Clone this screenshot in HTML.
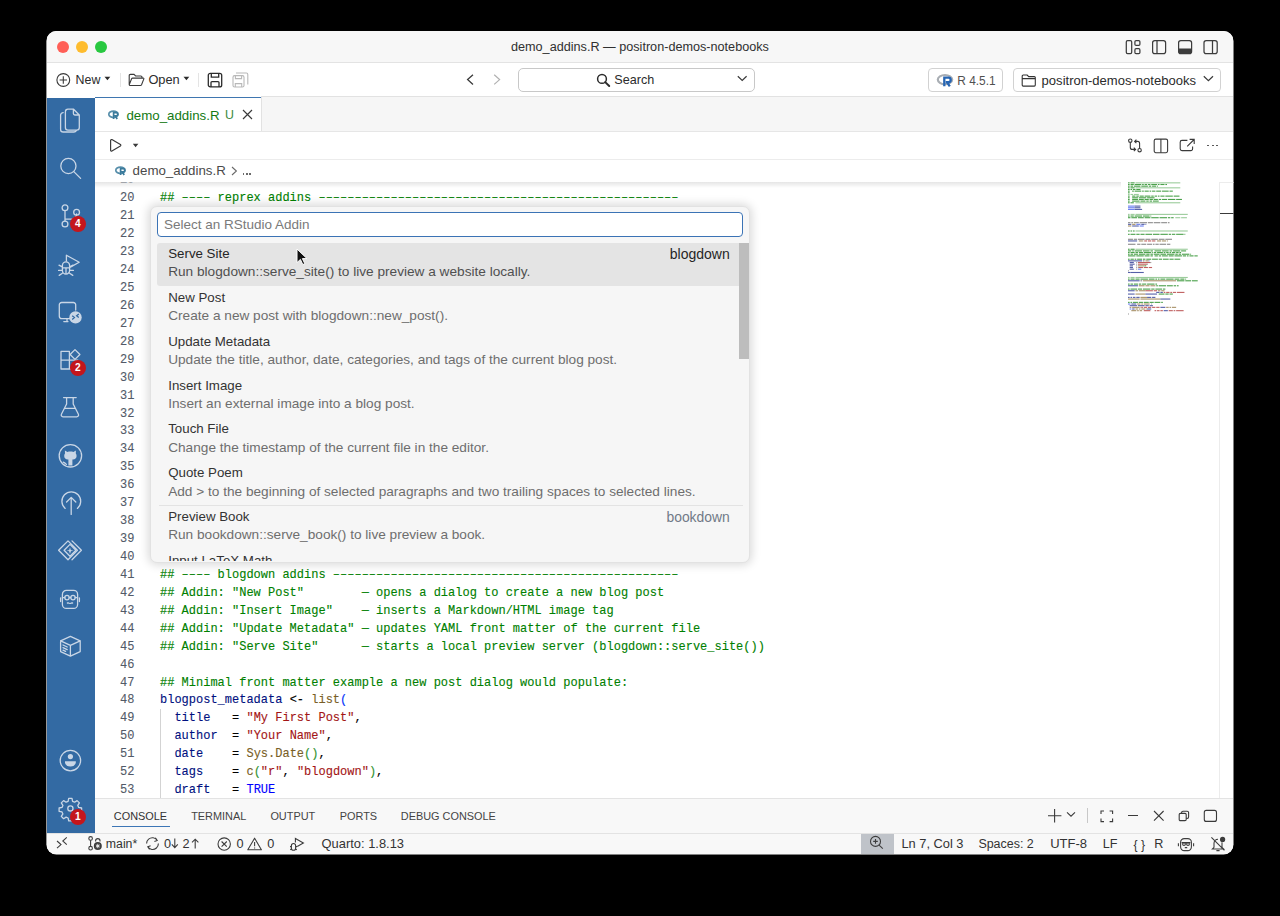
<!DOCTYPE html>
<html><head><meta charset="utf-8">
<style>
*{box-sizing:border-box;margin:0;padding:0}
html,body{width:1280px;height:916px;background:#000;overflow:hidden}
body{font-family:"Liberation Sans",sans-serif;position:relative}
.win{position:absolute;left:0;top:0;width:1280px;height:916px;clip-path:inset(31px 46.5px 61.6px 46.4px round 10px);background:#fff}
.a{position:absolute}
.t{position:absolute;white-space:pre;line-height:1}
svg{position:absolute;overflow:visible}
</style></head><body><div class="win">
<div class="a" style="left:47px;top:31px;width:1186px;height:31px;background:#f7f7f7"></div>
<div class="a" style="left:47px;top:62px;width:1186px;height:1px;background:#e3e3e3"></div>
<div class="a" style="left:56.9px;top:40.7px;width:12px;height:12px;border-radius:50%;background:#ff5f57"></div>
<div class="a" style="left:76.0px;top:40.7px;width:12px;height:12px;border-radius:50%;background:#febc2e"></div>
<div class="a" style="left:95.0px;top:40.7px;width:12px;height:12px;border-radius:50%;background:#28c840"></div>
<div class="t" style="left:511.00px;top:41.05px;font-size:12.65px;color:#303030;font-weight:400;font-family:"Liberation Sans",sans-serif;letter-spacing:0px;">demo_addins.R — positron-demos-notebooks</div>
<svg style="left:1125px;top:39px" width="16" height="16" viewBox="0 0 16 16"><rect x="1.3" y="1.6" width="5.4" height="13" rx="1.3" fill="none" stroke="#3c3c3c" stroke-width="1.25"/><rect x="9.9" y="1.6" width="5" height="4.8" rx="1.2" fill="none" stroke="#3c3c3c" stroke-width="1.25"/><rect x="9.9" y="9.7" width="5" height="4.9" rx="1.2" fill="none" stroke="#3c3c3c" stroke-width="1.25"/></svg>
<svg style="left:1151px;top:39px" width="16" height="16" viewBox="0 0 16 16"><rect x="1.6" y="1.6" width="13" height="13" rx="2.2" fill="none" stroke="#3c3c3c" stroke-width="1.25"/><line x1="6" y1="1.6" x2="6" y2="14.6" fill="none" stroke="#3c3c3c" stroke-width="1.25"/></svg>
<svg style="left:1177px;top:39px" width="16" height="16" viewBox="0 0 16 16"><rect x="1.6" y="1.6" width="13" height="13" rx="2.2" fill="none" stroke="#3c3c3c" stroke-width="1.25"/><path d="M1.6 9.6 H14.6 V12.4 a2.2 2.2 0 0 1 -2.2 2.2 H3.8 a2.2 2.2 0 0 1 -2.2 -2.2 Z" fill="#3c3c3c"/></svg>
<svg style="left:1203px;top:39px" width="16" height="16" viewBox="0 0 16 16"><rect x="1.0" y="1.6" width="13.2" height="13" rx="2.2" fill="none" stroke="#3c3c3c" stroke-width="1.25"/><line x1="9.5" y1="1.6" x2="9.5" y2="14.6" fill="none" stroke="#3c3c3c" stroke-width="1.25"/></svg>
<div class="a" style="left:47px;top:63px;width:1186px;height:34px;background:#ffffff"></div>
<svg style="left:56px;top:73px" width="15" height="15" viewBox="0 0 15 15"><circle cx="7.3" cy="7" r="6.4" fill="none" stroke="#3a3a3a" stroke-width="1.1"/><path d="M7.3 3.3V10.7M3.6 7H11" fill="none" stroke="#3a3a3a" stroke-width="1.1"/></svg>
<div class="t" style="left:75.60px;top:73.86px;font-size:12.4px;color:#2b2b2b;font-weight:400;font-family:"Liberation Sans",sans-serif;letter-spacing:0px;">New</div>
<svg style="left:104px;top:76px" width="7" height="5" viewBox="0 0 7 5"><path d="M0.5 0.8H6.3L3.4 4.3Z" fill="#2b2b2b"/></svg>
<div class="a" style="left:120px;top:73px;width:1px;height:14px;background:#e4e4e4"></div>
<svg style="left:128px;top:73px" width="17" height="14" viewBox="0 0 17 14"><path d="M1.2 11.8V2.6a1.2 1.2 0 0 1 1.2-1.2H6l1.6 1.6h5.2a1.2 1.2 0 0 1 1.2 1.2v1.6M1.2 11.8l2.4-6a1.2 1.2 0 0 1 1.1-0.7h10.6a0.6 0.6 0 0 1 .55 .8l-2.3 5.9a1.2 1.2 0 0 1-1.1 .7H2.2a1 1 0 0 1-1-1" fill="none" stroke="#3a3a3a" stroke-width="1.1"/></svg>
<div class="t" style="left:148.40px;top:73.52px;font-size:12.8px;color:#2b2b2b;font-weight:400;font-family:"Liberation Sans",sans-serif;letter-spacing:0px;">Open</div>
<svg style="left:183px;top:76px" width="7" height="5" viewBox="0 0 7 5"><path d="M0.5 0.8H6.3L3.4 4.3Z" fill="#2b2b2b"/></svg>
<div class="a" style="left:198px;top:73px;width:1px;height:14px;background:#e4e4e4"></div>
<svg style="left:207px;top:72px" width="16" height="16" viewBox="0 0 16 16"><rect x="1.3" y="1.3" width="13.4" height="13.6" rx="2" fill="none" stroke="#2b2b2b" stroke-width="1.3"/><path d="M4.3 1.3V5.2H11.7V1.3M4 14.9V10.6a1 1 0 0 1 1-1H11a1 1 0 0 1 1 1V14.9" fill="none" stroke="#2b2b2b" stroke-width="1.3"/></svg>
<svg style="left:232px;top:72px" width="17" height="17" viewBox="0 0 17 17"><rect x="1" y="3.6" width="11" height="11.4" rx="1.6" fill="none" stroke="#b8b8b8" stroke-width="1.1"/><path d="M3.4 3.6V6.6H9.6V3.6M3.3 15V11.6h6.4V15M4 1H14.4a1.4 1.4 0 0 1 1.4 1.4V12.4" fill="none" stroke="#b8b8b8" stroke-width="1.1"/></svg>
<svg style="left:466px;top:74px" width="9" height="12" viewBox="0 0 9 12"><path d="M7 0.8L1.6 5.6 7 10.4" fill="none" stroke="#3a3a3a" stroke-width="1.3"/></svg>
<svg style="left:493px;top:74px" width="9" height="12" viewBox="0 0 9 12"><path d="M1.2 0.8L6.6 5.6 1.2 10.4" fill="none" stroke="#b0b0b0" stroke-width="1.2"/></svg>
<div class="a" style="left:517.5px;top:68.3px;width:237px;height:23.5px;border:1px solid #c8c8c8;border-radius:5px;background:#fff"></div>
<svg style="left:596px;top:73px" width="15" height="14" viewBox="0 0 15 14"><circle cx="6" cy="5.9" r="4.4" fill="none" stroke="#2b2b2b" stroke-width="1.5"/><path d="M9.2 9.1L13.2 13" stroke="#2b2b2b" stroke-width="2" stroke-linecap="round"/></svg>
<div class="t" style="left:614.30px;top:73.89px;font-size:12.6px;color:#2b2b2b;font-weight:400;font-family:"Liberation Sans",sans-serif;letter-spacing:0px;">Search</div>
<svg style="left:737px;top:75px" width="11" height="7" viewBox="0 0 11 7"><path d="M0.8 1.2L5.2 5.4 9.6 1.2" fill="none" stroke="#3a3a3a" stroke-width="1.2"/></svg>
<div class="a" style="left:928.3px;top:68.3px;width:75.2px;height:23.5px;border:1px solid #d2d2d2;border-radius:4px;background:#fff"></div>
<svg style="left:937px;top:74px" width="18" height="13" viewBox="0 0 18 13"><ellipse cx="8" cy="5.6" rx="7.2" ry="4.6" fill="none" stroke="#a9aeb4" stroke-width="2.2"/><path d="M6.2 3.6h5.2a2.3 2.3 0 0 1 0 4.6h-2.6M7.3 3.6V12.3M9.9 8.2L12.8 12.3" fill="none" stroke="#2665b3" stroke-width="2.3"/></svg>
<div class="t" style="left:957.30px;top:76.29px;font-size:11.9px;color:#505050;font-weight:400;font-family:"Liberation Sans",sans-serif;letter-spacing:0px;">R 4.5.1</div>
<div class="a" style="left:1012.5px;top:68.3px;width:208px;height:23.5px;border:1px solid #d2d2d2;border-radius:4px;background:#fff"></div>
<svg style="left:1021px;top:74px" width="16" height="13" viewBox="0 0 16 13"><path d="M1.2 11.1V2a1 1 0 0 1 1-1h4l1.5 1.6h5.6a1 1 0 0 1 1 1v7.5a1 1 0 0 1-1 1H2.2a1 1 0 0 1-1-1ZM1.2 4.6h13.1" fill="none" stroke="#333" stroke-width="1.1"/></svg>
<div class="t" style="left:1041.60px;top:73.51px;font-size:13.05px;color:#2b2b2b;font-weight:400;font-family:"Liberation Sans",sans-serif;letter-spacing:0px;">positron-demos-notebooks</div>
<svg style="left:1203px;top:75px" width="12" height="7" viewBox="0 0 12 7"><path d="M0.8 1.2L5.4 5.6 10 1.2" fill="none" stroke="#3a3a3a" stroke-width="1.2"/></svg>
<div class="a" style="left:47px;top:98px;width:48px;height:735px;background:#336aa3"></div>
<svg style="left:58px;top:108px" width="24" height="26" viewBox="0 0 24 26"><path d="M5.2 4.6 a2.6 2.6 0 0 0-2.6 2.6V21.4a2.6 2.6 0 0 0 2.6 2.6H16a2.6 2.6 0 0 0 2.3-1.4" fill="none" stroke="#c9d6e6" stroke-width="1.3" stroke-linecap="round" stroke-linejoin="round"/><path d="M7.4 3.8a2.6 2.6 0 0 1 2.6-2.6h5.6l5.7 5.8V19.6a2.6 2.6 0 0 1-2.6 2.6H10a2.6 2.6 0 0 1-2.6-2.6Z M15.4 1.4V5.6a1.4 1.4 0 0 0 1.4 1.4h4.4" fill="none" stroke="#c9d6e6" stroke-width="1.3" stroke-linecap="round" stroke-linejoin="round"/></svg>
<svg style="left:58px;top:156px" width="24" height="24" viewBox="0 0 24 24"><circle cx="10.4" cy="10" r="7.6" fill="none" stroke="#c9d6e6" stroke-width="1.3" stroke-linecap="round" stroke-linejoin="round"/><path d="M15.8 15.6L22.6 22.4" fill="none" stroke="#c9d6e6" stroke-width="1.3" stroke-linecap="round" stroke-linejoin="round" stroke-width="1.5"/></svg>
<svg style="left:58px;top:202px" width="24" height="28" viewBox="0 0 24 28"><circle cx="7" cy="5.8" r="2.9" fill="none" stroke="#c9d6e6" stroke-width="1.3" stroke-linecap="round" stroke-linejoin="round"/><circle cx="7" cy="22" r="2.9" fill="none" stroke="#c9d6e6" stroke-width="1.3" stroke-linecap="round" stroke-linejoin="round"/><circle cx="18.6" cy="10.2" r="2.9" fill="none" stroke="#c9d6e6" stroke-width="1.3" stroke-linecap="round" stroke-linejoin="round"/><path d="M7 8.7V19.1M7 17.2H13.4a5.2 5.2 0 0 0 5.2-5.2V13.1" fill="none" stroke="#c9d6e6" stroke-width="1.3" stroke-linecap="round" stroke-linejoin="round"/></svg>
<svg style="left:56px;top:252px" width="26" height="26" viewBox="0 0 26 26"><path d="M10.4 9V3.2l12.8 7-8.8 4.9" fill="none" stroke="#c9d6e6" stroke-width="1.3" stroke-linecap="round" stroke-linejoin="round"/><path d="M6.4 13.4a3.6 3.6 0 0 1 7.2 0v5a3.6 3.6 0 0 1-7.2 0Z M6.4 15.8H13.6M10 15.8V22 M3 13.2l3.2 1.6M17 13.2l-3.2 1.6M2.6 18.4H6.2M13.8 18.4h3.6M3.2 23.4l3.2-2.2M16.8 23.4l-3.2-2.2" fill="none" stroke="#c9d6e6" stroke-width="1.3" stroke-linecap="round" stroke-linejoin="round" stroke-width="1.15"/></svg>
<svg style="left:57px;top:300px" width="26" height="26" viewBox="0 0 26 26"><path d="M13 18.6H4.6a2.3 2.3 0 0 1-2.3-2.3V4.8a2.3 2.3 0 0 1 2.3-2.3H16.4a2.3 2.3 0 0 1 2.3 2.3V10M10 18.8V21.6M6.8 21.6H11" fill="none" stroke="#c9d6e6" stroke-width="1.3" stroke-linecap="round" stroke-linejoin="round"/><circle cx="18.5" cy="17.4" r="6.2" fill="#c9d6e6"/><path d="M15.2 15.8l2.2 1.8-2.2 1.8M21.8 14l-2.2 1.8 2.2 1.8" fill="none" stroke="#336aa3" stroke-width="1.3"/></svg>
<svg style="left:58px;top:348px" width="26" height="26" viewBox="0 0 26 26"><path d="M3 3.4h8.4v17.6H3ZM3 12.2H11.4M11.4 12.2h8.4V21H11.4" fill="none" stroke="#c9d6e6" stroke-width="1.3" stroke-linecap="round" stroke-linejoin="round"/><path d="M17 1.6l4.9 4.9-4.9 4.9-4.9-4.9Z" fill="none" stroke="#c9d6e6" stroke-width="1.3" stroke-linecap="round" stroke-linejoin="round"/></svg>
<svg style="left:58px;top:395px" width="24" height="25" viewBox="0 0 24 25"><path d="M5.6 2.6H18.2M8.6 2.6V9L3.4 19.2a1.8 1.8 0 0 0 1.6 2.6H18.8a1.8 1.8 0 0 0 1.6-2.6L15.2 9V2.6M6.4 13.4H17.4" fill="none" stroke="#c9d6e6" stroke-width="1.3" stroke-linecap="round" stroke-linejoin="round" stroke-width="1.4"/></svg>
<svg style="left:57px;top:442px" width="28" height="28" viewBox="0 0 28 28"><circle cx="13.4" cy="13.8" r="11.2" fill="none" stroke="#c9d6e6" stroke-width="1.3" stroke-linecap="round" stroke-linejoin="round" stroke-width="1.3"/><path d="M11.4 23.6V17.4h-.6c-2 0-3.6-1.5-3.6-3.5 0-.9.3-1.7.8-2.3l-.1-3.2 2.5 1.5c.9-.3 1.9-.4 3-.4s2.1.1 3 .4l2.5-1.5-.1 3.2c.5.6.8 1.4.8 2.3 0 2-1.6 3.5-3.6 3.5h-.6V23.6Z" fill="#c9d6e6"/><path d="M6.2 20.2c1.4.4 2.2 1.2 3.2 2.2" fill="none" stroke="#c9d6e6" stroke-width="1.3" stroke-linecap="round" stroke-linejoin="round" stroke-width="1.1"/></svg>
<svg style="left:58px;top:489px" width="26" height="28" viewBox="0 0 26 28"><path d="M7.2 19.4A9.4 9.4 0 1 1 19.4 19.4" fill="none" stroke="#c9d6e6" stroke-width="1.3" stroke-linecap="round" stroke-linejoin="round" stroke-width="1.5"/><path d="M13.2 25.4V8.4M8.6 13l4.6-4.6 4.6 4.6" fill="none" stroke="#c9d6e6" stroke-width="1.3" stroke-linecap="round" stroke-linejoin="round" stroke-width="1.5"/></svg>
<svg style="left:57px;top:539px" width="26" height="26" viewBox="0 0 26 26"><path d="M11 1.9l9.4 9.4-9.4 9.4-9.4-9.4Z" fill="none" stroke="#c9d6e6" stroke-width="1.3" stroke-linecap="round" stroke-linejoin="round" stroke-width="1.1"/><path d="M15 1.9l9.4 9.4-9.4 9.4" fill="none" stroke="#c9d6e6" stroke-width="1.3" stroke-linecap="round" stroke-linejoin="round" stroke-width="1.1"/><path d="M13 5.4l5.9 5.9-5.9 5.9-5.9-5.9Z" fill="none" stroke="#c9d6e6" stroke-width="1.3" stroke-linecap="round" stroke-linejoin="round" stroke-width="1.1"/><path d="M13 8.6l.9 2.7 2.7.0-2.7.9-.9 2.7-.9-2.7-2.7-.9 2.7-.0Z" fill="#c9d6e6"/></svg>
<svg style="left:57px;top:588px" width="26" height="24" viewBox="0 0 26 24"><path d="M5.4 6.4a4 4 0 0 1 4-4h7.2a4 4 0 0 1 4 4V16.4a4 4 0 0 1-4 4H9.4a4 4 0 0 1-4-4Z" fill="none" stroke="#c9d6e6" stroke-width="1.3" stroke-linecap="round" stroke-linejoin="round" stroke-width="1.4"/><circle cx="10" cy="9.6" r="2.2" fill="none" stroke="#c9d6e6" stroke-width="1.3" stroke-linecap="round" stroke-linejoin="round" stroke-width="1.1"/><circle cx="16" cy="9.6" r="2.2" fill="none" stroke="#c9d6e6" stroke-width="1.3" stroke-linecap="round" stroke-linejoin="round" stroke-width="1.1"/><path d="M5.4 9.6H7.8M12.2 9.6H13.8M18.2 9.6H20.6M3.6 10v3.6M22.4 10v3.6" fill="none" stroke="#c9d6e6" stroke-width="1.3" stroke-linecap="round" stroke-linejoin="round" stroke-width="1.1"/><path d="M10.4 15H11.4M12.6 15.3H13.6M14.6 15H15.6" fill="none" stroke="#c9d6e6" stroke-width="1.3" stroke-linecap="round" stroke-linejoin="round" stroke-width="1.1"/></svg>
<svg style="left:58px;top:634px" width="26" height="26" viewBox="0 0 26 26"><path d="M12.4 2.4l9.8 4.4V17.6l-9.8 4.6-9.8-4.6V6.8Z M2.6 6.8l9.8 4.6 9.8-4.6M12.4 11.4V22.2" fill="none" stroke="#c9d6e6" stroke-width="1.3" stroke-linecap="round" stroke-linejoin="round" stroke-width="1.2"/><path d="M5 11l4.2 2M5 13.6l4.2 2M5 16.2l2.6 1.2" fill="none" stroke="#c9d6e6" stroke-width="1.3" stroke-linecap="round" stroke-linejoin="round" stroke-width="1.1"/></svg>
<svg style="left:58px;top:748px" width="26" height="26" viewBox="0 0 26 26"><circle cx="12.4" cy="12.6" r="10.2" fill="none" stroke="#c9d6e6" stroke-width="1.3" stroke-linecap="round" stroke-linejoin="round" stroke-width="1.2"/><circle cx="12.4" cy="8.6" r="2.6" fill="#c9d6e6"/><path d="M7 13.2H17.8V14.4a5.4 4.2 0 0 1-10.8 0Z" fill="#c9d6e6"/></svg>
<svg style="left:58px;top:796px" width="25" height="25" viewBox="0 0 25 25"><path d="M10.7 2.4h3.3l.6 2.9 2 .9 2.5-1.6 2.3 2.3-1.6 2.5.9 2 2.9.6v3.3l-2.9.6-.9 2 1.6 2.5-2.3 2.3-2.5-1.6-2 .9-.6 2.9h-3.3l-.6-2.9-2-.9-2.5 1.6-2.3-2.3 1.6-2.5-.9-2-2.9-.6v-3.3l2.9-.6.9-2-1.6-2.5 2.3-2.3 2.5 1.6 2-.9Z" fill="none" stroke="#c9d6e6" stroke-width="1.3" stroke-linecap="round" stroke-linejoin="round" stroke-width="1.2"/><circle cx="12.4" cy="12.4" r="2.6" fill="none" stroke="#c9d6e6" stroke-width="1.3" stroke-linecap="round" stroke-linejoin="round" stroke-width="1.2"/></svg>
<div class="a" style="left:70.4px;top:216.4px;width:16px;height:16px;border-radius:50%;background:#c4161c"></div>
<div class="t" style="left:75.10px;top:219.33px;font-size:10.2px;color:#ffffff;font-weight:700;font-family:"Liberation Sans",sans-serif;letter-spacing:0px;">4</div>
<div class="a" style="left:70.4px;top:360.2px;width:16px;height:16px;border-radius:50%;background:#c4161c"></div>
<div class="t" style="left:75.10px;top:363.13px;font-size:10.2px;color:#ffffff;font-weight:700;font-family:"Liberation Sans",sans-serif;letter-spacing:0px;">2</div>
<div class="a" style="left:70.4px;top:808.6px;width:16px;height:16px;border-radius:50%;background:#c4161c"></div>
<div class="t" style="left:75.10px;top:811.53px;font-size:10.2px;color:#ffffff;font-weight:700;font-family:"Liberation Sans",sans-serif;letter-spacing:0px;">1</div>
<div class="a" style="left:95px;top:97px;width:1138px;height:34px;background:#f6f6f6"></div>
<div class="a" style="left:261px;top:96px;width:972px;height:1px;background:#e2e2e2"></div>
<div class="a" style="left:95px;top:131px;width:1138px;height:1px;background:#e6e6e6"></div>
<div class="a" style="left:95px;top:97px;width:166px;height:34px;background:#ffffff;border-top:1px solid #3f76b0"></div>
<div class="a" style="left:261px;top:97px;width:1px;height:34px;background:#e2e2e2"></div>
<svg style="left:108.4px;top:109.6px" width="13" height="10" viewBox="0 0 13 10"><g transform="scale(1.0)"><ellipse cx="5.4" cy="4.3" rx="4.6" ry="3.2" fill="none" stroke="#3b7b9c" stroke-width="1.7" opacity="0.85"/><path d="M4.8 2.6h3.4a1.6 1.6 0 0 1 0 3.2H6.2M5.6 2.6V9M7.2 5.8l2 3.2" fill="none" stroke="#3b7b9c" stroke-width="1.7"/></g></svg>
<div class="t" style="left:126.40px;top:108.69px;font-size:13.3px;color:#147a14;font-weight:400;font-family:"Liberation Sans",sans-serif;letter-spacing:0px;">demo_addins.R</div>
<div class="t" style="left:225.00px;top:109.06px;font-size:12.4px;color:#3d8a3d;font-weight:400;font-family:"Liberation Sans",sans-serif;letter-spacing:0px;-webkit-text-stroke:0.35px #3d8a3d;transform:scaleX(0.9);transform-origin:0 0">U</div>
<svg style="left:242px;top:109.4px" width="11" height="11" viewBox="0 0 11 11"><path d="M1 1L10 10M10 1L1 10" stroke="#3a3a3a" stroke-width="1.15"/></svg>
<div class="a" style="left:95px;top:132px;width:1138px;height:27px;background:#ffffff"></div>
<div class="a" style="left:95px;top:159px;width:1138px;height:1px;background:#ececec"></div>
<svg style="left:109px;top:138px" width="14" height="15" viewBox="0 0 14 15"><path d="M1.6 2.4a0.9 0.9 0 0 1 1.3-.8L11.4 6.6a0.9 0.9 0 0 1 0 1.5L2.9 13a0.9 0.9 0 0 1-1.3-.8Z" fill="none" stroke="#3a3a3a" stroke-width="1.2" stroke-linejoin="round"/></svg>
<svg style="left:132px;top:143px" width="8" height="6" viewBox="0 0 8 6"><path d="M0.8 0.8H6.4L3.6 4.2Z" fill="#3a3a3a"/></svg>
<svg style="left:1127px;top:138px" width="17" height="17" viewBox="0 0 17 17"><circle cx="3.3" cy="2.7" r="1.7" fill="none" stroke="#3a3a3a" stroke-width="1.1"/><path d="M3.3 4.4V9.4a2 2 0 0 0 2 2H8.6M6.8 9.6L8.6 11.4 6.8 13.2" fill="none" stroke="#3a3a3a" stroke-width="1.1"/><circle cx="12.6" cy="12.2" r="1.7" fill="none" stroke="#3a3a3a" stroke-width="1.1"/><path d="M12.6 10.5V5.4a2 2 0 0 0-2-2H7.6M9.4 1.6L7.6 3.4 9.4 5.2" fill="none" stroke="#3a3a3a" stroke-width="1.1"/></svg>
<svg style="left:1153px;top:138px" width="16" height="16" viewBox="0 0 16 16"><rect x="1.2" y="1.1" width="13.4" height="13.6" rx="1.6" fill="none" stroke="#3a3a3a" stroke-width="1.1" stroke-width="1.2"/><path d="M7.9 1.1V14.7" fill="none" stroke="#3a3a3a" stroke-width="1.1" stroke-width="1.2"/></svg>
<svg style="left:1179px;top:138px" width="17" height="16" viewBox="0 0 17 16"><path d="M8.4 2.4H3a1.8 1.8 0 0 0-1.8 1.8V10.8a1.8 1.8 0 0 0 1.8 1.8H11.8a1.8 1.8 0 0 0 1.8-1.8V8.6M8.2 8.4L14.6 2M10.6 1.4H15.2V6" fill="none" stroke="#3a3a3a" stroke-width="1.1" stroke-width="1.2"/></svg>
<div class="a" style="left:1207.3px;top:144.6px;width:1.9px;height:1.9px;background:#444;border-radius:50%"></div>
<div class="a" style="left:1211.7px;top:144.6px;width:1.9px;height:1.9px;background:#444;border-radius:50%"></div>
<div class="a" style="left:1216.1px;top:144.6px;width:1.9px;height:1.9px;background:#444;border-radius:50%"></div>
<div class="a" style="left:95px;top:160px;width:1138px;height:22px;background:#ffffff"></div>
<svg style="left:114.6px;top:166.2px" width="13" height="10" viewBox="0 0 13 10"><g transform="scale(1.0)"><ellipse cx="5.4" cy="4.3" rx="4.6" ry="3.2" fill="none" stroke="#3b7b9c" stroke-width="1.7" opacity="0.85"/><path d="M4.8 2.6h3.4a1.6 1.6 0 0 1 0 3.2H6.2M5.6 2.6V9M7.2 5.8l2 3.2" fill="none" stroke="#3b7b9c" stroke-width="1.7"/></g></svg>
<div class="t" style="left:132.60px;top:163.69px;font-size:13.3px;color:#4a4a4a;font-weight:400;font-family:"Liberation Sans",sans-serif;letter-spacing:0px;">demo_addins.R</div>
<svg style="left:231px;top:166px" width="7" height="10" viewBox="0 0 7 10"><path d="M1 1L5.4 5 1 9" fill="none" stroke="#6a6a6a" stroke-width="1.1"/></svg>
<div class="a" style="left:242.8px;top:173.0px;width:1.6px;height:1.8px;background:#6a6a6a"></div>
<div class="a" style="left:246.10000000000002px;top:173.0px;width:1.6px;height:1.8px;background:#6a6a6a"></div>
<div class="a" style="left:249.4px;top:173.0px;width:1.6px;height:1.8px;background:#6a6a6a"></div>
<div class="a" style="left:95px;top:182px;width:1138px;height:616px;background:#ffffff"></div>
<div class="a" style="left:95px;top:182px;width:1138px;height:616px;overflow:hidden">
<div class="t" style="left:25.20px;top:-10.53px;height:17.93px;line-height:17.93px;font-family:'Liberation Mono',monospace;font-size:13px;color:#525a68;-webkit-text-stroke:0.1px #525a68;opacity:0.45;transform:scaleX(0.9231);transform-origin:0 0">19</div>
<div class="t" style="left:25.20px;top:7.40px;height:17.93px;line-height:17.93px;font-family:'Liberation Mono',monospace;font-size:13px;color:#525a68;-webkit-text-stroke:0.1px #525a68;transform:scaleX(0.9231);transform-origin:0 0">20</div>
<div class="t" style="left:64.60px;top:7.40px;height:17.93px;line-height:17.93px;font-family:'Liberation Mono',monospace;font-size:13px;-webkit-text-stroke:0.12px currentColor;transform:scaleX(0.9231);transform-origin:0 0"><span style="color:#008000;-webkit-text-stroke:0.12px #008000">## –––– reprex addins ––––––––––––––––––––––––––––––––––––––––––––––––––</span></div>
<div class="t" style="left:25.20px;top:25.33px;height:17.93px;line-height:17.93px;font-family:'Liberation Mono',monospace;font-size:13px;color:#525a68;-webkit-text-stroke:0.1px #525a68;transform:scaleX(0.9231);transform-origin:0 0">21</div>
<div class="t" style="left:25.20px;top:43.26px;height:17.93px;line-height:17.93px;font-family:'Liberation Mono',monospace;font-size:13px;color:#525a68;-webkit-text-stroke:0.1px #525a68;transform:scaleX(0.9231);transform-origin:0 0">22</div>
<div class="t" style="left:25.20px;top:61.19px;height:17.93px;line-height:17.93px;font-family:'Liberation Mono',monospace;font-size:13px;color:#525a68;-webkit-text-stroke:0.1px #525a68;transform:scaleX(0.9231);transform-origin:0 0">23</div>
<div class="t" style="left:25.20px;top:79.12px;height:17.93px;line-height:17.93px;font-family:'Liberation Mono',monospace;font-size:13px;color:#525a68;-webkit-text-stroke:0.1px #525a68;transform:scaleX(0.9231);transform-origin:0 0">24</div>
<div class="t" style="left:25.20px;top:97.05px;height:17.93px;line-height:17.93px;font-family:'Liberation Mono',monospace;font-size:13px;color:#525a68;-webkit-text-stroke:0.1px #525a68;transform:scaleX(0.9231);transform-origin:0 0">25</div>
<div class="t" style="left:25.20px;top:114.98px;height:17.93px;line-height:17.93px;font-family:'Liberation Mono',monospace;font-size:13px;color:#525a68;-webkit-text-stroke:0.1px #525a68;transform:scaleX(0.9231);transform-origin:0 0">26</div>
<div class="t" style="left:25.20px;top:132.91px;height:17.93px;line-height:17.93px;font-family:'Liberation Mono',monospace;font-size:13px;color:#525a68;-webkit-text-stroke:0.1px #525a68;transform:scaleX(0.9231);transform-origin:0 0">27</div>
<div class="t" style="left:25.20px;top:150.84px;height:17.93px;line-height:17.93px;font-family:'Liberation Mono',monospace;font-size:13px;color:#525a68;-webkit-text-stroke:0.1px #525a68;transform:scaleX(0.9231);transform-origin:0 0">28</div>
<div class="t" style="left:25.20px;top:168.77px;height:17.93px;line-height:17.93px;font-family:'Liberation Mono',monospace;font-size:13px;color:#525a68;-webkit-text-stroke:0.1px #525a68;transform:scaleX(0.9231);transform-origin:0 0">29</div>
<div class="t" style="left:25.20px;top:186.70px;height:17.93px;line-height:17.93px;font-family:'Liberation Mono',monospace;font-size:13px;color:#525a68;-webkit-text-stroke:0.1px #525a68;transform:scaleX(0.9231);transform-origin:0 0">30</div>
<div class="t" style="left:25.20px;top:204.63px;height:17.93px;line-height:17.93px;font-family:'Liberation Mono',monospace;font-size:13px;color:#525a68;-webkit-text-stroke:0.1px #525a68;transform:scaleX(0.9231);transform-origin:0 0">31</div>
<div class="t" style="left:25.20px;top:222.56px;height:17.93px;line-height:17.93px;font-family:'Liberation Mono',monospace;font-size:13px;color:#525a68;-webkit-text-stroke:0.1px #525a68;transform:scaleX(0.9231);transform-origin:0 0">32</div>
<div class="t" style="left:25.20px;top:240.49px;height:17.93px;line-height:17.93px;font-family:'Liberation Mono',monospace;font-size:13px;color:#525a68;-webkit-text-stroke:0.1px #525a68;transform:scaleX(0.9231);transform-origin:0 0">33</div>
<div class="t" style="left:25.20px;top:258.42px;height:17.93px;line-height:17.93px;font-family:'Liberation Mono',monospace;font-size:13px;color:#525a68;-webkit-text-stroke:0.1px #525a68;transform:scaleX(0.9231);transform-origin:0 0">34</div>
<div class="t" style="left:25.20px;top:276.35px;height:17.93px;line-height:17.93px;font-family:'Liberation Mono',monospace;font-size:13px;color:#525a68;-webkit-text-stroke:0.1px #525a68;transform:scaleX(0.9231);transform-origin:0 0">35</div>
<div class="t" style="left:25.20px;top:294.28px;height:17.93px;line-height:17.93px;font-family:'Liberation Mono',monospace;font-size:13px;color:#525a68;-webkit-text-stroke:0.1px #525a68;transform:scaleX(0.9231);transform-origin:0 0">36</div>
<div class="t" style="left:25.20px;top:312.21px;height:17.93px;line-height:17.93px;font-family:'Liberation Mono',monospace;font-size:13px;color:#525a68;-webkit-text-stroke:0.1px #525a68;transform:scaleX(0.9231);transform-origin:0 0">37</div>
<div class="t" style="left:25.20px;top:330.14px;height:17.93px;line-height:17.93px;font-family:'Liberation Mono',monospace;font-size:13px;color:#525a68;-webkit-text-stroke:0.1px #525a68;transform:scaleX(0.9231);transform-origin:0 0">38</div>
<div class="t" style="left:25.20px;top:348.07px;height:17.93px;line-height:17.93px;font-family:'Liberation Mono',monospace;font-size:13px;color:#525a68;-webkit-text-stroke:0.1px #525a68;transform:scaleX(0.9231);transform-origin:0 0">39</div>
<div class="t" style="left:25.20px;top:366.00px;height:17.93px;line-height:17.93px;font-family:'Liberation Mono',monospace;font-size:13px;color:#525a68;-webkit-text-stroke:0.1px #525a68;transform:scaleX(0.9231);transform-origin:0 0">40</div>
<div class="t" style="left:25.20px;top:383.93px;height:17.93px;line-height:17.93px;font-family:'Liberation Mono',monospace;font-size:13px;color:#525a68;-webkit-text-stroke:0.1px #525a68;transform:scaleX(0.9231);transform-origin:0 0">41</div>
<div class="t" style="left:64.60px;top:383.93px;height:17.93px;line-height:17.93px;font-family:'Liberation Mono',monospace;font-size:13px;-webkit-text-stroke:0.12px currentColor;transform:scaleX(0.9231);transform-origin:0 0"><span style="color:#008000;-webkit-text-stroke:0.12px #008000">## –––– blogdown addins ––––––––––––––––––––––––––––––––––––––––––––––––</span></div>
<div class="t" style="left:25.20px;top:401.86px;height:17.93px;line-height:17.93px;font-family:'Liberation Mono',monospace;font-size:13px;color:#525a68;-webkit-text-stroke:0.1px #525a68;transform:scaleX(0.9231);transform-origin:0 0">42</div>
<div class="t" style="left:64.60px;top:401.86px;height:17.93px;line-height:17.93px;font-family:'Liberation Mono',monospace;font-size:13px;-webkit-text-stroke:0.12px currentColor;transform:scaleX(0.9231);transform-origin:0 0"><span style="color:#008000;-webkit-text-stroke:0.12px #008000">## Addin: &quot;New Post&quot;        — opens a dialog to create a new blog post</span></div>
<div class="t" style="left:25.20px;top:419.79px;height:17.93px;line-height:17.93px;font-family:'Liberation Mono',monospace;font-size:13px;color:#525a68;-webkit-text-stroke:0.1px #525a68;transform:scaleX(0.9231);transform-origin:0 0">43</div>
<div class="t" style="left:64.60px;top:419.79px;height:17.93px;line-height:17.93px;font-family:'Liberation Mono',monospace;font-size:13px;-webkit-text-stroke:0.12px currentColor;transform:scaleX(0.9231);transform-origin:0 0"><span style="color:#008000;-webkit-text-stroke:0.12px #008000">## Addin: &quot;Insert Image&quot;    — inserts a Markdown/HTML image tag</span></div>
<div class="t" style="left:25.20px;top:437.72px;height:17.93px;line-height:17.93px;font-family:'Liberation Mono',monospace;font-size:13px;color:#525a68;-webkit-text-stroke:0.1px #525a68;transform:scaleX(0.9231);transform-origin:0 0">44</div>
<div class="t" style="left:64.60px;top:437.72px;height:17.93px;line-height:17.93px;font-family:'Liberation Mono',monospace;font-size:13px;-webkit-text-stroke:0.12px currentColor;transform:scaleX(0.9231);transform-origin:0 0"><span style="color:#008000;-webkit-text-stroke:0.12px #008000">## Addin: &quot;Update Metadata&quot; — updates YAML front matter of the current file</span></div>
<div class="t" style="left:25.20px;top:455.65px;height:17.93px;line-height:17.93px;font-family:'Liberation Mono',monospace;font-size:13px;color:#525a68;-webkit-text-stroke:0.1px #525a68;transform:scaleX(0.9231);transform-origin:0 0">45</div>
<div class="t" style="left:64.60px;top:455.65px;height:17.93px;line-height:17.93px;font-family:'Liberation Mono',monospace;font-size:13px;-webkit-text-stroke:0.12px currentColor;transform:scaleX(0.9231);transform-origin:0 0"><span style="color:#008000;-webkit-text-stroke:0.12px #008000">## Addin: &quot;Serve Site&quot;      — starts a local preview server (blogdown::serve_site())</span></div>
<div class="t" style="left:25.20px;top:473.58px;height:17.93px;line-height:17.93px;font-family:'Liberation Mono',monospace;font-size:13px;color:#525a68;-webkit-text-stroke:0.1px #525a68;transform:scaleX(0.9231);transform-origin:0 0">46</div>
<div class="t" style="left:25.20px;top:491.51px;height:17.93px;line-height:17.93px;font-family:'Liberation Mono',monospace;font-size:13px;color:#525a68;-webkit-text-stroke:0.1px #525a68;transform:scaleX(0.9231);transform-origin:0 0">47</div>
<div class="t" style="left:64.60px;top:491.51px;height:17.93px;line-height:17.93px;font-family:'Liberation Mono',monospace;font-size:13px;-webkit-text-stroke:0.12px currentColor;transform:scaleX(0.9231);transform-origin:0 0"><span style="color:#008000;-webkit-text-stroke:0.12px #008000">## Minimal front matter example a new post dialog would populate:</span></div>
<div class="t" style="left:25.20px;top:509.44px;height:17.93px;line-height:17.93px;font-family:'Liberation Mono',monospace;font-size:13px;color:#525a68;-webkit-text-stroke:0.1px #525a68;transform:scaleX(0.9231);transform-origin:0 0">48</div>
<div class="t" style="left:64.60px;top:509.44px;height:17.93px;line-height:17.93px;font-family:'Liberation Mono',monospace;font-size:13px;-webkit-text-stroke:0.12px currentColor;transform:scaleX(0.9231);transform-origin:0 0"><span style="color:#001080;-webkit-text-stroke:0.12px #001080">blogpost_metadata</span><span style="color:#000000;-webkit-text-stroke:0.12px #000000"> &lt;- </span><span style="color:#795e26;-webkit-text-stroke:0.12px #795e26">list</span><span style="color:#0431fa;-webkit-text-stroke:0.12px #0431fa">(</span></div>
<div class="t" style="left:25.20px;top:527.37px;height:17.93px;line-height:17.93px;font-family:'Liberation Mono',monospace;font-size:13px;color:#525a68;-webkit-text-stroke:0.1px #525a68;transform:scaleX(0.9231);transform-origin:0 0">49</div>
<div class="t" style="left:64.60px;top:527.37px;height:17.93px;line-height:17.93px;font-family:'Liberation Mono',monospace;font-size:13px;-webkit-text-stroke:0.12px currentColor;transform:scaleX(0.9231);transform-origin:0 0"><span style="color:#000000;-webkit-text-stroke:0.12px #000000">  </span><span style="color:#001080;-webkit-text-stroke:0.12px #001080">title</span><span style="color:#000000;-webkit-text-stroke:0.12px #000000">   = </span><span style="color:#a31515;-webkit-text-stroke:0.12px #a31515">&quot;My First Post&quot;</span><span style="color:#000000;-webkit-text-stroke:0.12px #000000">,</span></div>
<div class="t" style="left:25.20px;top:545.30px;height:17.93px;line-height:17.93px;font-family:'Liberation Mono',monospace;font-size:13px;color:#525a68;-webkit-text-stroke:0.1px #525a68;transform:scaleX(0.9231);transform-origin:0 0">50</div>
<div class="t" style="left:64.60px;top:545.30px;height:17.93px;line-height:17.93px;font-family:'Liberation Mono',monospace;font-size:13px;-webkit-text-stroke:0.12px currentColor;transform:scaleX(0.9231);transform-origin:0 0"><span style="color:#000000;-webkit-text-stroke:0.12px #000000">  </span><span style="color:#001080;-webkit-text-stroke:0.12px #001080">author</span><span style="color:#000000;-webkit-text-stroke:0.12px #000000">  = </span><span style="color:#a31515;-webkit-text-stroke:0.12px #a31515">&quot;Your Name&quot;</span><span style="color:#000000;-webkit-text-stroke:0.12px #000000">,</span></div>
<div class="t" style="left:25.20px;top:563.23px;height:17.93px;line-height:17.93px;font-family:'Liberation Mono',monospace;font-size:13px;color:#525a68;-webkit-text-stroke:0.1px #525a68;transform:scaleX(0.9231);transform-origin:0 0">51</div>
<div class="t" style="left:64.60px;top:563.23px;height:17.93px;line-height:17.93px;font-family:'Liberation Mono',monospace;font-size:13px;-webkit-text-stroke:0.12px currentColor;transform:scaleX(0.9231);transform-origin:0 0"><span style="color:#000000;-webkit-text-stroke:0.12px #000000">  </span><span style="color:#001080;-webkit-text-stroke:0.12px #001080">date</span><span style="color:#000000;-webkit-text-stroke:0.12px #000000">    = </span><span style="color:#795e26;-webkit-text-stroke:0.12px #795e26">Sys.Date</span><span style="color:#319331;-webkit-text-stroke:0.12px #319331">()</span><span style="color:#000000;-webkit-text-stroke:0.12px #000000">,</span></div>
<div class="t" style="left:25.20px;top:581.16px;height:17.93px;line-height:17.93px;font-family:'Liberation Mono',monospace;font-size:13px;color:#525a68;-webkit-text-stroke:0.1px #525a68;transform:scaleX(0.9231);transform-origin:0 0">52</div>
<div class="t" style="left:64.60px;top:581.16px;height:17.93px;line-height:17.93px;font-family:'Liberation Mono',monospace;font-size:13px;-webkit-text-stroke:0.12px currentColor;transform:scaleX(0.9231);transform-origin:0 0"><span style="color:#000000;-webkit-text-stroke:0.12px #000000">  </span><span style="color:#001080;-webkit-text-stroke:0.12px #001080">tags</span><span style="color:#000000;-webkit-text-stroke:0.12px #000000">    = </span><span style="color:#795e26;-webkit-text-stroke:0.12px #795e26">c</span><span style="color:#319331;-webkit-text-stroke:0.12px #319331">(</span><span style="color:#a31515;-webkit-text-stroke:0.12px #a31515">&quot;r&quot;</span><span style="color:#000000;-webkit-text-stroke:0.12px #000000">, </span><span style="color:#a31515;-webkit-text-stroke:0.12px #a31515">&quot;blogdown&quot;</span><span style="color:#319331;-webkit-text-stroke:0.12px #319331">)</span><span style="color:#000000;-webkit-text-stroke:0.12px #000000">,</span></div>
<div class="t" style="left:25.20px;top:599.09px;height:17.93px;line-height:17.93px;font-family:'Liberation Mono',monospace;font-size:13px;color:#525a68;-webkit-text-stroke:0.1px #525a68;transform:scaleX(0.9231);transform-origin:0 0">53</div>
<div class="t" style="left:64.60px;top:599.09px;height:17.93px;line-height:17.93px;font-family:'Liberation Mono',monospace;font-size:13px;-webkit-text-stroke:0.12px currentColor;transform:scaleX(0.9231);transform-origin:0 0"><span style="color:#000000;-webkit-text-stroke:0.12px #000000">  </span><span style="color:#001080;-webkit-text-stroke:0.12px #001080">draft</span><span style="color:#000000;-webkit-text-stroke:0.12px #000000">   = </span><span style="color:#0000ff;-webkit-text-stroke:0.12px #0000ff">TRUE</span></div>
<div class="t" style="left:25.20px;top:617.02px;height:17.93px;line-height:17.93px;font-family:'Liberation Mono',monospace;font-size:13px;color:#525a68;-webkit-text-stroke:0.1px #525a68;transform:scaleX(0.9231);transform-origin:0 0">54</div>
<div class="a" style="left:65px;top:527.37px;width:1px;height:89.65px;background:#d3d3d3"></div>
</div>
<div class="a" style="left:95px;top:182px;width:1026px;height:6px;background:linear-gradient(rgba(0,0,0,0.10),rgba(0,0,0,0))"></div>
<div class="a" style="left:1219px;top:182px;width:1px;height:616px;background:#ececec"></div>
<div class="a" style="left:1220px;top:213px;width:14px;height:1px;background:#3a3a3a"></div>
<div class="a" style="left:1219px;top:182px;width:15px;height:1px;background:#ececec"></div>
<svg style="left:1128px;top:182px" width="80" height="135" viewBox="0 0 80 135"><rect x="0.00" y="0.30" width="1.66" height="1.1" fill="#4aa04a"/><rect x="2.49" y="0.30" width="4.15" height="1.1" fill="#4aa04a"/><rect x="7.47" y="0.30" width="44.82" height="1.1" fill="#9ccc9c"/><rect x="0.00" y="1.96" width="1.66" height="1.1" fill="#4aa04a"/><rect x="2.49" y="1.96" width="3.32" height="1.1" fill="#4aa04a"/><rect x="6.64" y="1.96" width="6.64" height="1.1" fill="#4aa04a"/><rect x="14.11" y="1.96" width="1.66" height="1.1" fill="#4aa04a"/><rect x="16.60" y="1.96" width="2.49" height="1.1" fill="#4aa04a"/><rect x="19.92" y="1.96" width="2.49" height="1.1" fill="#4aa04a"/><rect x="23.24" y="1.96" width="5.81" height="1.1" fill="#4aa04a"/><rect x="29.88" y="1.96" width="1.66" height="1.1" fill="#4aa04a"/><rect x="32.37" y="1.96" width="4.15" height="1.1" fill="#4aa04a"/><rect x="37.35" y="1.96" width="1.66" height="1.1" fill="#4aa04a"/><rect x="0.00" y="3.62" width="1.66" height="1.1" fill="#4aa04a"/><rect x="2.49" y="3.62" width="2.49" height="1.1" fill="#4aa04a"/><rect x="5.81" y="3.62" width="6.64" height="1.1" fill="#4aa04a"/><rect x="13.28" y="3.62" width="6.64" height="1.1" fill="#4aa04a"/><rect x="20.75" y="3.62" width="2.49" height="1.1" fill="#4aa04a"/><rect x="24.07" y="3.62" width="4.15" height="1.1" fill="#4aa04a"/><rect x="29.05" y="3.62" width="0.83" height="1.1" fill="#4aa04a"/><rect x="0.00" y="5.28" width="1.66" height="1.1" fill="#4aa04a"/><rect x="2.49" y="5.28" width="4.15" height="1.1" fill="#4aa04a"/><rect x="7.47" y="5.28" width="44.82" height="1.1" fill="#9ccc9c"/><rect x="0.00" y="6.94" width="1.66" height="1.1" fill="#4aa04a"/><rect x="2.49" y="6.94" width="1.66" height="1.1" fill="#4aa04a"/><rect x="4.98" y="6.94" width="2.49" height="1.1" fill="#4aa04a"/><rect x="8.30" y="6.94" width="4.15" height="1.1" fill="#4aa04a"/><rect x="0.00" y="8.60" width="1.66" height="1.1" fill="#4aa04a"/><rect x="4.15" y="8.60" width="1.66" height="1.1" fill="#4aa04a"/><rect x="6.64" y="8.60" width="6.64" height="1.1" fill="#4aa04a"/><rect x="14.11" y="8.60" width="1.66" height="1.1" fill="#4aa04a"/><rect x="16.60" y="8.60" width="4.15" height="1.1" fill="#4aa04a"/><rect x="21.58" y="8.60" width="1.66" height="1.1" fill="#4aa04a"/><rect x="24.07" y="8.60" width="3.32" height="1.1" fill="#4aa04a"/><rect x="28.22" y="8.60" width="4.98" height="1.1" fill="#4aa04a"/><rect x="34.03" y="8.60" width="6.64" height="1.1" fill="#4aa04a"/><rect x="41.50" y="8.60" width="3.32" height="1.1" fill="#4aa04a"/><rect x="0.00" y="10.26" width="1.66" height="1.1" fill="#4aa04a"/><rect x="0.00" y="11.92" width="1.66" height="1.1" fill="#9ccc9c"/><rect x="2.49" y="11.92" width="2.49" height="1.1" fill="#9ccc9c"/><rect x="5.81" y="11.92" width="4.98" height="1.1" fill="#9ccc9c"/><rect x="0.00" y="13.58" width="1.66" height="1.1" fill="#4aa04a"/><rect x="4.15" y="13.58" width="3.32" height="1.1" fill="#4aa04a"/><rect x="8.30" y="13.58" width="2.49" height="1.1" fill="#4aa04a"/><rect x="11.62" y="13.58" width="4.15" height="1.1" fill="#4aa04a"/><rect x="16.60" y="13.58" width="5.81" height="1.1" fill="#4aa04a"/><rect x="23.24" y="13.58" width="2.49" height="1.1" fill="#4aa04a"/><rect x="26.56" y="13.58" width="2.49" height="1.1" fill="#4aa04a"/><rect x="29.88" y="13.58" width="1.66" height="1.1" fill="#4aa04a"/><rect x="32.37" y="13.58" width="4.15" height="1.1" fill="#4aa04a"/><rect x="37.35" y="13.58" width="7.47" height="1.1" fill="#4aa04a"/><rect x="45.65" y="13.58" width="5.81" height="1.1" fill="#4aa04a"/><rect x="0.00" y="15.24" width="1.66" height="1.1" fill="#4aa04a"/><rect x="4.15" y="15.24" width="5.81" height="1.1" fill="#4aa04a"/><rect x="10.79" y="15.24" width="7.47" height="1.1" fill="#4aa04a"/><rect x="19.09" y="15.24" width="7.47" height="1.1" fill="#4aa04a"/><rect x="0.00" y="16.90" width="1.66" height="1.1" fill="#4aa04a"/><rect x="4.15" y="16.90" width="5.81" height="1.1" fill="#4aa04a"/><rect x="10.79" y="16.90" width="4.98" height="1.1" fill="#4aa04a"/><rect x="16.60" y="16.90" width="4.15" height="1.1" fill="#4aa04a"/><rect x="21.58" y="16.90" width="3.32" height="1.1" fill="#4aa04a"/><rect x="25.73" y="16.90" width="4.15" height="1.1" fill="#4aa04a"/><rect x="30.71" y="16.90" width="2.49" height="1.1" fill="#4aa04a"/><rect x="34.03" y="16.90" width="4.98" height="1.1" fill="#4aa04a"/><rect x="39.84" y="16.90" width="7.47" height="1.1" fill="#4aa04a"/><rect x="48.14" y="16.90" width="5.81" height="1.1" fill="#4aa04a"/><rect x="0.00" y="18.56" width="1.66" height="1.1" fill="#4aa04a"/><rect x="4.15" y="18.56" width="7.47" height="1.1" fill="#4aa04a"/><rect x="12.45" y="18.56" width="4.98" height="1.1" fill="#4aa04a"/><rect x="18.26" y="18.56" width="2.49" height="1.1" fill="#4aa04a"/><rect x="21.58" y="18.56" width="2.49" height="1.1" fill="#4aa04a"/><rect x="24.90" y="18.56" width="5.81" height="1.1" fill="#4aa04a"/><rect x="0.00" y="20.22" width="1.66" height="1.1" fill="#4aa04a"/><rect x="2.49" y="20.22" width="3.32" height="1.1" fill="#4aa04a"/><rect x="7.47" y="20.22" width="44.82" height="1.1" fill="#9ccc9c"/><rect x="0.00" y="23.54" width="6.64" height="1.1" fill="#6a7ef0"/><rect x="6.64" y="23.54" width="5.81" height="1.1" fill="#5560a8"/><rect x="0.00" y="25.20" width="6.64" height="1.1" fill="#6a7ef0"/><rect x="6.64" y="25.20" width="5.81" height="1.1" fill="#5560a8"/><rect x="0.00" y="26.86" width="6.64" height="1.1" fill="#6a7ef0"/><rect x="6.64" y="26.86" width="7.47" height="1.1" fill="#5560a8"/><rect x="0.00" y="31.84" width="1.66" height="1.1" fill="#9ccc9c"/><rect x="2.49" y="31.84" width="4.15" height="1.1" fill="#9ccc9c"/><rect x="7.47" y="31.84" width="52.29" height="1.1" fill="#9ccc9c"/><rect x="0.00" y="33.50" width="1.66" height="1.1" fill="#4aa04a"/><rect x="2.49" y="33.50" width="3.32" height="1.1" fill="#4aa04a"/><rect x="6.64" y="33.50" width="7.47" height="1.1" fill="#4aa04a"/><rect x="14.94" y="33.50" width="6.64" height="1.1" fill="#4aa04a"/><rect x="22.41" y="33.50" width="0.83" height="1.1" fill="#4aa04a"/><rect x="0.00" y="35.16" width="2.49" height="1.1" fill="#4aa04a"/><rect x="3.32" y="35.16" width="5.81" height="1.1" fill="#4aa04a"/><rect x="9.96" y="35.16" width="5.81" height="1.1" fill="#4aa04a"/><rect x="16.60" y="35.16" width="5.81" height="1.1" fill="#4aa04a"/><rect x="23.24" y="35.16" width="7.47" height="1.1" fill="#4aa04a"/><rect x="31.54" y="35.16" width="7.47" height="1.1" fill="#4aa04a"/><rect x="39.84" y="35.16" width="2.49" height="1.1" fill="#4aa04a"/><rect x="43.16" y="35.16" width="2.49" height="1.1" fill="#4aa04a"/><rect x="47.31" y="35.16" width="4.98" height="1.1" fill="#9ccc9c"/><rect x="53.12" y="35.16" width="5.81" height="1.1" fill="#9ccc9c"/><rect x="0.00" y="40.14" width="2.49" height="1.1" fill="#8a8a8a"/><rect x="3.32" y="40.14" width="1.66" height="1.1" fill="#8a8a8a"/><rect x="5.81" y="40.14" width="4.98" height="1.1" fill="#8a8a8a"/><rect x="11.62" y="40.14" width="7.47" height="1.1" fill="#8a8a8a"/><rect x="19.92" y="40.14" width="4.98" height="1.1" fill="#8a8a8a"/><rect x="25.73" y="40.14" width="6.64" height="1.1" fill="#8a8a8a"/><rect x="33.20" y="40.14" width="5.81" height="1.1" fill="#8a8a8a"/><rect x="39.84" y="40.14" width="1.66" height="1.1" fill="#8a8a8a"/><rect x="0.00" y="41.80" width="3.32" height="1.1" fill="#5560a8"/><rect x="4.15" y="41.80" width="3.32" height="1.1" fill="#a89268"/><rect x="8.30" y="41.80" width="4.15" height="1.1" fill="#6a7ef0"/><rect x="13.28" y="41.80" width="3.32" height="1.1" fill="#5560a8"/><rect x="17.43" y="41.80" width="0.83" height="1.1" fill="#5560a8"/><rect x="0.00" y="43.46" width="3.32" height="1.1" fill="#a89268"/><rect x="4.15" y="43.46" width="6.64" height="1.1" fill="#5560a8"/><rect x="11.62" y="43.46" width="4.15" height="1.1" fill="#6a7ef0"/><rect x="0.00" y="48.44" width="1.66" height="1.1" fill="#4aa04a"/><rect x="2.49" y="48.44" width="1.66" height="1.1" fill="#4aa04a"/><rect x="4.98" y="48.44" width="1.66" height="1.1" fill="#4aa04a"/><rect x="7.47" y="48.44" width="52.29" height="1.1" fill="#9ccc9c"/><rect x="0.00" y="51.76" width="1.66" height="1.1" fill="#4aa04a"/><rect x="2.49" y="51.76" width="4.98" height="1.1" fill="#4aa04a"/><rect x="8.30" y="51.76" width="3.32" height="1.1" fill="#4aa04a"/><rect x="12.45" y="51.76" width="4.15" height="1.1" fill="#4aa04a"/><rect x="17.43" y="51.76" width="6.64" height="1.1" fill="#4aa04a"/><rect x="24.90" y="51.76" width="6.64" height="1.1" fill="#4aa04a"/><rect x="32.37" y="51.76" width="7.47" height="1.1" fill="#4aa04a"/><rect x="40.67" y="51.76" width="2.49" height="1.1" fill="#4aa04a"/><rect x="43.99" y="51.76" width="3.32" height="1.1" fill="#4aa04a"/><rect x="48.14" y="51.76" width="7.47" height="1.1" fill="#4aa04a"/><rect x="56.44" y="51.76" width="0.83" height="1.1" fill="#4aa04a"/><rect x="0.00" y="56.74" width="4.98" height="1.1" fill="#8a8a8a"/><rect x="5.81" y="56.74" width="3.32" height="1.1" fill="#8a8a8a"/><rect x="9.96" y="56.74" width="6.64" height="1.1" fill="#8a8a8a"/><rect x="17.43" y="56.74" width="4.98" height="1.1" fill="#8a8a8a"/><rect x="23.24" y="56.74" width="6.64" height="1.1" fill="#8a8a8a"/><rect x="30.71" y="56.74" width="5.81" height="1.1" fill="#8a8a8a"/><rect x="37.35" y="56.74" width="6.64" height="1.1" fill="#8a8a8a"/><rect x="0.00" y="58.40" width="9.13" height="1.1" fill="#5560a8"/><rect x="10.79" y="58.40" width="4.15" height="1.1" fill="#a89268"/><rect x="15.77" y="58.40" width="0.83" height="1.1" fill="#a89268"/><rect x="16.60" y="58.40" width="2.49" height="1.1" fill="#c06060"/><rect x="19.92" y="58.40" width="3.32" height="1.1" fill="#c06060"/><rect x="24.07" y="58.40" width="3.32" height="1.1" fill="#c06060"/><rect x="29.05" y="58.40" width="4.15" height="1.1" fill="#a89268"/><rect x="34.03" y="58.40" width="4.15" height="1.1" fill="#a89268"/><rect x="39.01" y="58.40" width="0.83" height="1.1" fill="#a89268"/><rect x="0.00" y="61.72" width="7.47" height="1.1" fill="#8a8a8a"/><rect x="9.13" y="61.72" width="3.32" height="1.1" fill="#8a8a8a"/><rect x="13.28" y="61.72" width="4.98" height="1.1" fill="#8a8a8a"/><rect x="19.09" y="61.72" width="4.98" height="1.1" fill="#8a8a8a"/><rect x="24.90" y="61.72" width="1.66" height="1.1" fill="#8a8a8a"/><rect x="27.39" y="61.72" width="3.32" height="1.1" fill="#8a8a8a"/><rect x="31.54" y="61.72" width="6.64" height="1.1" fill="#8a8a8a"/><rect x="39.01" y="61.72" width="3.32" height="1.1" fill="#8a8a8a"/><rect x="0.00" y="66.70" width="1.66" height="1.1" fill="#4aa04a"/><rect x="2.49" y="66.70" width="4.15" height="1.1" fill="#4aa04a"/><rect x="7.47" y="66.70" width="52.29" height="1.1" fill="#9ccc9c"/><rect x="0.00" y="68.36" width="3.32" height="1.1" fill="#4aa04a"/><rect x="4.15" y="68.36" width="1.66" height="1.1" fill="#4aa04a"/><rect x="6.64" y="68.36" width="7.47" height="1.1" fill="#4aa04a"/><rect x="14.94" y="68.36" width="6.64" height="1.1" fill="#4aa04a"/><rect x="22.41" y="68.36" width="2.49" height="1.1" fill="#4aa04a"/><rect x="26.56" y="68.36" width="6.64" height="1.1" fill="#4aa04a"/><rect x="34.03" y="68.36" width="6.64" height="1.1" fill="#4aa04a"/><rect x="41.50" y="68.36" width="2.49" height="1.1" fill="#4aa04a"/><rect x="44.82" y="68.36" width="7.47" height="1.1" fill="#4aa04a"/><rect x="53.12" y="68.36" width="4.98" height="1.1" fill="#4aa04a"/><rect x="0.00" y="70.02" width="1.66" height="1.1" fill="#4aa04a"/><rect x="2.49" y="70.02" width="4.15" height="1.1" fill="#4aa04a"/><rect x="7.47" y="70.02" width="2.49" height="1.1" fill="#4aa04a"/><rect x="10.79" y="70.02" width="4.15" height="1.1" fill="#4aa04a"/><rect x="15.77" y="70.02" width="7.47" height="1.1" fill="#4aa04a"/><rect x="24.07" y="70.02" width="0.83" height="1.1" fill="#4aa04a"/><rect x="25.73" y="70.02" width="2.49" height="1.1" fill="#4aa04a"/><rect x="29.05" y="70.02" width="5.81" height="1.1" fill="#4aa04a"/><rect x="35.69" y="70.02" width="1.66" height="1.1" fill="#4aa04a"/><rect x="38.18" y="70.02" width="2.49" height="1.1" fill="#4aa04a"/><rect x="41.50" y="70.02" width="1.66" height="1.1" fill="#4aa04a"/><rect x="43.99" y="70.02" width="3.32" height="1.1" fill="#4aa04a"/><rect x="48.14" y="70.02" width="2.49" height="1.1" fill="#4aa04a"/><rect x="51.46" y="70.02" width="1.66" height="1.1" fill="#4aa04a"/><rect x="0.00" y="71.68" width="1.66" height="1.1" fill="#4aa04a"/><rect x="2.49" y="71.68" width="2.49" height="1.1" fill="#4aa04a"/><rect x="5.81" y="71.68" width="4.15" height="1.1" fill="#4aa04a"/><rect x="10.79" y="71.68" width="6.64" height="1.1" fill="#4aa04a"/><rect x="18.26" y="71.68" width="3.32" height="1.1" fill="#4aa04a"/><rect x="22.41" y="71.68" width="2.49" height="1.1" fill="#4aa04a"/><rect x="25.73" y="71.68" width="5.81" height="1.1" fill="#4aa04a"/><rect x="32.37" y="71.68" width="5.81" height="1.1" fill="#4aa04a"/><rect x="39.01" y="71.68" width="7.47" height="1.1" fill="#4aa04a"/><rect x="47.31" y="71.68" width="2.49" height="1.1" fill="#4aa04a"/><rect x="50.63" y="71.68" width="2.49" height="1.1" fill="#4aa04a"/><rect x="53.95" y="71.68" width="7.47" height="1.1" fill="#4aa04a"/><rect x="62.25" y="71.68" width="0.83" height="1.1" fill="#4aa04a"/><rect x="0.00" y="73.34" width="7.47" height="1.1" fill="#4aa04a"/><rect x="8.30" y="73.34" width="7.47" height="1.1" fill="#4aa04a"/><rect x="16.60" y="73.34" width="4.98" height="1.1" fill="#4aa04a"/><rect x="22.41" y="73.34" width="2.49" height="1.1" fill="#4aa04a"/><rect x="26.56" y="73.34" width="3.32" height="1.1" fill="#4aa04a"/><rect x="30.71" y="73.34" width="2.49" height="1.1" fill="#4aa04a"/><rect x="34.03" y="73.34" width="5.81" height="1.1" fill="#4aa04a"/><rect x="40.67" y="73.34" width="4.98" height="1.1" fill="#4aa04a"/><rect x="46.48" y="73.34" width="7.47" height="1.1" fill="#4aa04a"/><rect x="54.78" y="73.34" width="3.32" height="1.1" fill="#4aa04a"/><rect x="58.93" y="73.34" width="1.66" height="1.1" fill="#4aa04a"/><rect x="61.42" y="73.34" width="4.15" height="1.1" fill="#4aa04a"/><rect x="66.40" y="73.34" width="3.32" height="1.1" fill="#4aa04a"/><rect x="0.00" y="76.66" width="1.66" height="1.1" fill="#4aa04a"/><rect x="2.49" y="76.66" width="3.32" height="1.1" fill="#4aa04a"/><rect x="6.64" y="76.66" width="1.66" height="1.1" fill="#4aa04a"/><rect x="9.13" y="76.66" width="4.98" height="1.1" fill="#4aa04a"/><rect x="14.94" y="76.66" width="2.49" height="1.1" fill="#4aa04a"/><rect x="18.26" y="76.66" width="4.98" height="1.1" fill="#4aa04a"/><rect x="24.07" y="76.66" width="5.81" height="1.1" fill="#4aa04a"/><rect x="30.71" y="76.66" width="3.32" height="1.1" fill="#4aa04a"/><rect x="34.86" y="76.66" width="5.81" height="1.1" fill="#4aa04a"/><rect x="41.50" y="76.66" width="4.15" height="1.1" fill="#4aa04a"/><rect x="46.48" y="76.66" width="5.81" height="1.1" fill="#4aa04a"/><rect x="0.00" y="78.32" width="14.11" height="1.1" fill="#5560a8"/><rect x="14.94" y="78.32" width="1.66" height="1.1" fill="#8a8a8a"/><rect x="17.43" y="78.32" width="3.32" height="1.1" fill="#a89268"/><rect x="20.75" y="78.32" width="0.83" height="1.1" fill="#6a7ef0"/><rect x="1.66" y="79.98" width="4.15" height="1.1" fill="#5560a8"/><rect x="8.30" y="79.98" width="0.83" height="1.1" fill="#8a8a8a"/><rect x="9.96" y="79.98" width="12.45" height="1.1" fill="#c06060"/><rect x="22.41" y="79.98" width="0.83" height="1.1" fill="#8a8a8a"/><rect x="1.66" y="81.64" width="4.98" height="1.1" fill="#5560a8"/><rect x="8.30" y="81.64" width="0.83" height="1.1" fill="#8a8a8a"/><rect x="9.96" y="81.64" width="9.13" height="1.1" fill="#c06060"/><rect x="19.09" y="81.64" width="0.83" height="1.1" fill="#8a8a8a"/><rect x="1.66" y="83.30" width="3.32" height="1.1" fill="#5560a8"/><rect x="8.30" y="83.30" width="0.83" height="1.1" fill="#8a8a8a"/><rect x="9.96" y="83.30" width="6.64" height="1.1" fill="#a89268"/><rect x="16.60" y="83.30" width="1.66" height="1.1" fill="#4aa04a"/><rect x="1.66" y="84.96" width="3.32" height="1.1" fill="#5560a8"/><rect x="8.30" y="84.96" width="0.83" height="1.1" fill="#8a8a8a"/><rect x="9.96" y="84.96" width="0.83" height="1.1" fill="#a89268"/><rect x="10.79" y="84.96" width="4.15" height="1.1" fill="#c06060"/><rect x="15.77" y="84.96" width="4.15" height="1.1" fill="#c06060"/><rect x="20.75" y="84.96" width="3.32" height="1.1" fill="#c06060"/><rect x="1.66" y="86.62" width="4.15" height="1.1" fill="#5560a8"/><rect x="8.30" y="86.62" width="0.83" height="1.1" fill="#8a8a8a"/><rect x="9.96" y="86.62" width="3.32" height="1.1" fill="#6a7ef0"/><rect x="0.00" y="88.28" width="0.83" height="1.1" fill="#8a8a8a"/><rect x="0.00" y="89.94" width="2.49" height="1.1" fill="#5560a8"/><rect x="2.49" y="89.94" width="13.28" height="1.1" fill="#5560a8"/><rect x="0.00" y="94.92" width="1.66" height="1.1" fill="#9ccc9c"/><rect x="2.49" y="94.92" width="4.15" height="1.1" fill="#9ccc9c"/><rect x="7.47" y="94.92" width="52.29" height="1.1" fill="#9ccc9c"/><rect x="0.00" y="96.58" width="1.66" height="1.1" fill="#4aa04a"/><rect x="2.49" y="96.58" width="4.15" height="1.1" fill="#4aa04a"/><rect x="7.47" y="96.58" width="4.15" height="1.1" fill="#4aa04a"/><rect x="12.45" y="96.58" width="7.47" height="1.1" fill="#4aa04a"/><rect x="20.75" y="96.58" width="5.81" height="1.1" fill="#4aa04a"/><rect x="27.39" y="96.58" width="1.66" height="1.1" fill="#4aa04a"/><rect x="29.88" y="96.58" width="1.66" height="1.1" fill="#4aa04a"/><rect x="32.37" y="96.58" width="4.98" height="1.1" fill="#4aa04a"/><rect x="38.18" y="96.58" width="7.47" height="1.1" fill="#4aa04a"/><rect x="46.48" y="96.58" width="4.98" height="1.1" fill="#4aa04a"/><rect x="52.29" y="96.58" width="4.15" height="1.1" fill="#4aa04a"/><rect x="57.27" y="96.58" width="0.83" height="1.1" fill="#4aa04a"/><rect x="0.00" y="98.24" width="11.62" height="1.1" fill="#5560a8"/><rect x="12.45" y="98.24" width="1.66" height="1.1" fill="#8a8a8a"/><rect x="14.94" y="98.24" width="33.20" height="1.1" fill="#a89268"/><rect x="48.97" y="98.24" width="7.47" height="1.1" fill="#4aa04a"/><rect x="57.27" y="98.24" width="5.81" height="1.1" fill="#4aa04a"/><rect x="63.91" y="98.24" width="5.81" height="1.1" fill="#4aa04a"/><rect x="0.00" y="101.56" width="1.66" height="1.1" fill="#4aa04a"/><rect x="2.49" y="101.56" width="2.49" height="1.1" fill="#4aa04a"/><rect x="5.81" y="101.56" width="4.15" height="1.1" fill="#4aa04a"/><rect x="10.79" y="101.56" width="2.49" height="1.1" fill="#4aa04a"/><rect x="14.11" y="101.56" width="4.15" height="1.1" fill="#4aa04a"/><rect x="19.09" y="101.56" width="7.47" height="1.1" fill="#4aa04a"/><rect x="27.39" y="101.56" width="1.66" height="1.1" fill="#4aa04a"/><rect x="0.00" y="103.22" width="9.96" height="1.1" fill="#5560a8"/><rect x="10.79" y="103.22" width="5.81" height="1.1" fill="#a89268"/><rect x="17.43" y="103.22" width="4.15" height="1.1" fill="#a89268"/><rect x="22.41" y="103.22" width="4.98" height="1.1" fill="#a89268"/><rect x="28.22" y="103.22" width="1.66" height="1.1" fill="#4aa04a"/><rect x="30.71" y="103.22" width="7.47" height="1.1" fill="#4aa04a"/><rect x="39.01" y="103.22" width="5.81" height="1.1" fill="#4aa04a"/><rect x="45.65" y="103.22" width="2.49" height="1.1" fill="#4aa04a"/><rect x="48.97" y="103.22" width="1.66" height="1.1" fill="#4aa04a"/><rect x="0.00" y="106.54" width="1.66" height="1.1" fill="#4aa04a"/><rect x="2.49" y="106.54" width="6.64" height="1.1" fill="#4aa04a"/><rect x="9.96" y="106.54" width="4.15" height="1.1" fill="#4aa04a"/><rect x="14.94" y="106.54" width="7.47" height="1.1" fill="#4aa04a"/><rect x="23.24" y="106.54" width="3.32" height="1.1" fill="#4aa04a"/><rect x="27.39" y="106.54" width="6.64" height="1.1" fill="#4aa04a"/><rect x="34.86" y="106.54" width="2.49" height="1.1" fill="#4aa04a"/><rect x="0.00" y="108.20" width="6.64" height="1.1" fill="#5560a8"/><rect x="7.47" y="108.20" width="2.49" height="1.1" fill="#a89268"/><rect x="10.79" y="108.20" width="6.64" height="1.1" fill="#a89268"/><rect x="17.43" y="108.20" width="7.47" height="1.1" fill="#c06060"/><rect x="25.73" y="108.20" width="3.32" height="1.1" fill="#c06060"/><rect x="29.88" y="108.20" width="2.49" height="1.1" fill="#a89268"/><rect x="33.20" y="108.20" width="3.32" height="1.1" fill="#a89268"/><rect x="28.22" y="109.86" width="3.32" height="1.1" fill="#5560a8"/><rect x="32.37" y="109.86" width="2.49" height="1.1" fill="#5560a8"/><rect x="35.69" y="109.86" width="1.66" height="1.1" fill="#c06060"/><rect x="38.18" y="109.86" width="3.32" height="1.1" fill="#c06060"/><rect x="42.33" y="109.86" width="1.66" height="1.1" fill="#c06060"/><rect x="44.82" y="109.86" width="3.32" height="1.1" fill="#c06060"/><rect x="48.97" y="109.86" width="7.47" height="1.1" fill="#c06060"/><rect x="0.00" y="111.52" width="6.64" height="1.1" fill="#5560a8"/><rect x="7.47" y="111.52" width="9.96" height="1.1" fill="#a89268"/><rect x="17.43" y="111.52" width="11.62" height="1.1" fill="#5560a8"/><rect x="30.71" y="111.52" width="5.81" height="1.1" fill="#4aa04a"/><rect x="37.35" y="111.52" width="3.32" height="1.1" fill="#4aa04a"/><rect x="41.50" y="111.52" width="3.32" height="1.1" fill="#4aa04a"/><rect x="0.00" y="114.84" width="1.66" height="1.1" fill="#5560a8"/><rect x="2.49" y="114.84" width="1.66" height="1.1" fill="#5560a8"/><rect x="4.98" y="114.84" width="2.49" height="1.1" fill="#5560a8"/><rect x="8.30" y="114.84" width="3.32" height="1.1" fill="#5560a8"/><rect x="12.45" y="114.84" width="6.64" height="1.1" fill="#a89268"/><rect x="19.09" y="114.84" width="4.15" height="1.1" fill="#5560a8"/><rect x="24.07" y="114.84" width="3.32" height="1.1" fill="#5560a8"/><rect x="0.00" y="116.50" width="11.62" height="1.1" fill="#a89268"/><rect x="12.45" y="116.50" width="19.92" height="1.1" fill="#a89268"/><rect x="32.37" y="116.50" width="9.96" height="1.1" fill="#5560a8"/><rect x="0.00" y="119.82" width="1.66" height="1.1" fill="#4aa04a"/><rect x="2.49" y="119.82" width="1.66" height="1.1" fill="#4aa04a"/><rect x="4.98" y="119.82" width="4.98" height="1.1" fill="#4aa04a"/><rect x="10.79" y="119.82" width="4.15" height="1.1" fill="#4aa04a"/><rect x="15.77" y="119.82" width="4.98" height="1.1" fill="#4aa04a"/><rect x="21.58" y="119.82" width="4.15" height="1.1" fill="#4aa04a"/><rect x="26.56" y="119.82" width="5.81" height="1.1" fill="#4aa04a"/><rect x="33.20" y="119.82" width="1.66" height="1.1" fill="#4aa04a"/><rect x="0.00" y="121.48" width="2.49" height="1.1" fill="#6a7ef0"/><rect x="3.32" y="121.48" width="4.98" height="1.1" fill="#5560a8"/><rect x="9.13" y="121.48" width="3.32" height="1.1" fill="#a89268"/><rect x="13.28" y="121.48" width="1.66" height="1.1" fill="#a89268"/><rect x="15.77" y="121.48" width="5.81" height="1.1" fill="#a89268"/><rect x="23.24" y="121.48" width="0.83" height="1.1" fill="#8a8a8a"/><rect x="1.66" y="123.14" width="7.47" height="1.1" fill="#5560a8"/><rect x="9.96" y="123.14" width="6.64" height="1.1" fill="#5560a8"/><rect x="17.43" y="123.14" width="3.32" height="1.1" fill="#5560a8"/><rect x="21.58" y="123.14" width="3.32" height="1.1" fill="#5560a8"/><rect x="1.66" y="124.80" width="1.66" height="1.1" fill="#a89268"/><rect x="4.15" y="124.80" width="7.47" height="1.1" fill="#a89268"/><rect x="12.45" y="124.80" width="0.83" height="1.1" fill="#a89268"/><rect x="13.28" y="124.80" width="1.66" height="1.1" fill="#c06060"/><rect x="15.77" y="124.80" width="3.32" height="1.1" fill="#c06060"/><rect x="19.92" y="124.80" width="3.32" height="1.1" fill="#c06060"/><rect x="24.07" y="124.80" width="3.32" height="1.1" fill="#c06060"/><rect x="28.22" y="124.80" width="3.32" height="1.1" fill="#c06060"/><rect x="32.37" y="124.80" width="4.98" height="1.1" fill="#5560a8"/><rect x="38.18" y="124.80" width="2.49" height="1.1" fill="#a89268"/><rect x="41.50" y="124.80" width="1.66" height="1.1" fill="#a89268"/><rect x="43.99" y="124.80" width="4.15" height="1.1" fill="#a89268"/><rect x="1.66" y="126.46" width="1.66" height="1.1" fill="#6a7ef0"/><rect x="4.15" y="126.46" width="2.49" height="1.1" fill="#5560a8"/><rect x="7.47" y="126.46" width="2.49" height="1.1" fill="#a89268"/><rect x="10.79" y="126.46" width="1.66" height="1.1" fill="#a89268"/><rect x="13.28" y="126.46" width="4.15" height="1.1" fill="#a89268"/><rect x="18.26" y="126.46" width="0.83" height="1.1" fill="#a89268"/><rect x="19.09" y="126.46" width="4.15" height="1.1" fill="#5560a8"/><rect x="3.32" y="128.12" width="4.98" height="1.1" fill="#a89268"/><rect x="9.13" y="128.12" width="1.66" height="1.1" fill="#a89268"/><rect x="11.62" y="128.12" width="2.49" height="1.1" fill="#a89268"/><rect x="15.77" y="128.12" width="6.64" height="1.1" fill="#c06060"/><rect x="26.56" y="128.12" width="1.66" height="1.1" fill="#c06060"/><rect x="29.05" y="128.12" width="2.49" height="1.1" fill="#c06060"/><rect x="32.37" y="128.12" width="2.49" height="1.1" fill="#c06060"/><rect x="35.69" y="128.12" width="4.15" height="1.1" fill="#5560a8"/><rect x="40.67" y="128.12" width="4.15" height="1.1" fill="#c06060"/><rect x="45.65" y="128.12" width="1.66" height="1.1" fill="#c06060"/><rect x="48.14" y="128.12" width="7.47" height="1.1" fill="#c06060"/><rect x="0.00" y="131.44" width="0.83" height="1.1" fill="#8a8a8a"/></svg>
<div class="a" style="left:150px;top:205.5px;width:599.5px;height:357px;background:#f6f6f6;border-radius:7px;box-shadow:0 0 10px 2px rgba(0,0,0,0.15);border:1px solid #e2e2e2"></div>
<div class="a" style="left:157px;top:212.4px;width:586px;height:24.4px;background:#ffffff;border:1px solid #3b73b5;border-radius:4px"></div>
<div class="t" style="left:164.00px;top:217.72px;font-size:13.5px;color:#7a7a7a;font-weight:400;font-family:"Liberation Sans",sans-serif;letter-spacing:0px;">Select an RStudio Addin</div>
<div class="a" style="left:152px;top:242.6px;width:597px;height:318px;overflow:hidden">
<div class="a" style="left:5px;top:0px;width:586px;height:43.5px;background:#e4e4e4;border-radius:3px"></div>
<div class="t" style="left:16.20px;top:4.29px;font-size:13.3px;color:#262626;letter-spacing:0px">Serve Site</div>
<div class="t" style="left:16.20px;top:22.50px;font-size:13.65px;color:#505050;letter-spacing:0px">Run blogdown::serve_site() to live preview a website locally.</div>
<div class="t" style="left:517.80px;top:4.90px;font-size:14.0px;color:#262626">blogdown</div>
<div class="t" style="left:16.20px;top:48.20px;font-size:13.3px;color:#333333;letter-spacing:0px">New Post</div>
<div class="t" style="left:16.20px;top:66.40px;font-size:13.65px;color:#6e6e6e;letter-spacing:0px">Create a new post with blogdown::new_post().</div>
<div class="t" style="left:16.20px;top:92.09px;font-size:13.3px;color:#333333;letter-spacing:0px">Update Metadata</div>
<div class="t" style="left:16.20px;top:110.30px;font-size:13.65px;color:#6e6e6e;letter-spacing:0px">Update the title, author, date, categories, and tags of the current blog post.</div>
<div class="t" style="left:16.20px;top:135.99px;font-size:13.3px;color:#333333;letter-spacing:0px">Insert Image</div>
<div class="t" style="left:16.20px;top:154.20px;font-size:13.65px;color:#6e6e6e;letter-spacing:0px">Insert an external image into a blog post.</div>
<div class="t" style="left:16.20px;top:179.90px;font-size:13.3px;color:#333333;letter-spacing:0px">Touch File</div>
<div class="t" style="left:16.20px;top:198.10px;font-size:13.65px;color:#6e6e6e;letter-spacing:0px">Change the timestamp of the current file in the editor.</div>
<div class="t" style="left:16.20px;top:223.80px;font-size:13.3px;color:#333333;letter-spacing:0px">Quote Poem</div>
<div class="t" style="left:16.20px;top:242.00px;font-size:13.65px;color:#6e6e6e;letter-spacing:0px">Add &gt; to the beginning of selected paragraphs and two trailing spaces to selected lines.</div>
<div class="a" style="left:7px;top:262.90px;width:584px;height:1px;background:#e3e3e3"></div>
<div class="t" style="left:16.20px;top:267.70px;font-size:13.3px;color:#333333;letter-spacing:0px">Preview Book</div>
<div class="t" style="left:16.20px;top:285.90px;font-size:13.65px;color:#6e6e6e;letter-spacing:0px">Run bookdown::serve_book() to live preview a book.</div>
<div class="t" style="left:514.45px;top:268.38px;font-size:13.9px;color:#717a87">bookdown</div>
<div class="t" style="left:16.20px;top:311.60px;font-size:13.3px;color:#333333;letter-spacing:0px">Input LaTeX Math</div>
<div class="t" style="left:16.20px;top:329.80px;font-size:13.65px;color:#6e6e6e;letter-spacing:0px">Open a dialog to input LaTeX math.</div>
</div>
<div class="a" style="left:739px;top:242.6px;width:10px;height:116px;background:#bdbdbd"></div>
<div class="a" style="left:95px;top:798px;width:1138px;height:35px;background:#f8f8f8"></div>
<div class="a" style="left:95px;top:798px;width:1138px;height:1px;background:#e3e3e3"></div>
<div class="t" style="left:113.80px;top:810.84px;font-size:10.9px;color:#333333;font-weight:400;font-family:"Liberation Sans",sans-serif;letter-spacing:0px;">CONSOLE</div>
<div class="t" style="left:191.20px;top:810.84px;font-size:10.9px;color:#444444;font-weight:400;font-family:"Liberation Sans",sans-serif;letter-spacing:0px;">TERMINAL</div>
<div class="t" style="left:270.40px;top:810.84px;font-size:10.9px;color:#444444;font-weight:400;font-family:"Liberation Sans",sans-serif;letter-spacing:0px;">OUTPUT</div>
<div class="t" style="left:339.80px;top:810.84px;font-size:10.9px;color:#444444;font-weight:400;font-family:"Liberation Sans",sans-serif;letter-spacing:0px;">PORTS</div>
<div class="t" style="left:400.80px;top:810.84px;font-size:10.9px;color:#444444;font-weight:400;font-family:"Liberation Sans",sans-serif;letter-spacing:0px;">DEBUG CONSOLE</div>
<div class="a" style="left:112px;top:826px;width:57.6px;height:1.2px;background:#3d76b6"></div>
<svg style="left:1047px;top:808px" width="15" height="15" viewBox="0 0 15 15"><path d="M7.6 1V14.4M1 7.7H14.4" fill="none" stroke="#3a3a3a" stroke-width="1.1" stroke-width="1.2"/></svg>
<svg style="left:1066px;top:811px" width="10" height="7" viewBox="0 0 10 7"><path d="M1 1.4L5 5.2 9 1.4" fill="none" stroke="#3a3a3a" stroke-width="1.1"/></svg>
<div class="a" style="left:1087px;top:808.3px;width:1px;height:15.2px;background:#c8c8c8"></div>
<svg style="left:1100px;top:810px" width="14" height="13" viewBox="0 0 14 13"><path d="M1 4V1H4M9.6 1H12.6V4M12.6 8.6V11.6H9.6M4 11.6H1V8.6" fill="none" stroke="#3a3a3a" stroke-width="1.1" stroke-width="1.2"/></svg>
<svg style="left:1127px;top:814px" width="12" height="3" viewBox="0 0 12 3"><path d="M1 1.5H11" fill="none" stroke="#3a3a3a" stroke-width="1.1"/></svg>
<svg style="left:1153px;top:810px" width="12" height="12" viewBox="0 0 12 12"><path d="M1 1L10.6 10.6M10.6 1L1 10.6" fill="none" stroke="#3a3a3a" stroke-width="1.1" stroke-width="1.15"/></svg>
<svg style="left:1178px;top:810px" width="13" height="12" viewBox="0 0 13 12"><rect x="1.2" y="3.4" width="7" height="7.2" rx="1.2" fill="none" stroke="#3a3a3a" stroke-width="1.1"/><path d="M3.6 3.4V2.6a1.4 1.4 0 0 1 1.4-1.4h4.2a1.4 1.4 0 0 1 1.4 1.4V7a1.4 1.4 0 0 1-1.4 1.4H8.2" fill="none" stroke="#3a3a3a" stroke-width="1.1"/></svg>
<svg style="left:1203px;top:809px" width="15" height="14" viewBox="0 0 15 14"><rect x="1.3" y="1.4" width="12.2" height="11" rx="2" fill="none" stroke="#3a3a3a" stroke-width="1.1" stroke-width="1.2"/></svg>
<div class="a" style="left:47px;top:833px;width:1186px;height:21px;background:#f8f8f8"></div>
<div class="a" style="left:47px;top:833px;width:1186px;height:1px;background:#e3e3e3"></div>
<svg style="left:56px;top:836px" width="12" height="14" viewBox="0 0 12 14"><path d="M1 5L5 8.6 1 12.2M10.8 1.4L6.8 5 10.8 8.6" fill="none" stroke="#3d3d3d" stroke-width="1.1"/></svg>
<svg style="left:88px;top:836px" width="15" height="15" viewBox="0 0 15 15"><circle cx="2.6" cy="2.4" r="1.8" fill="none" stroke="#3d3d3d" stroke-width="1.1"/><circle cx="2.6" cy="12.2" r="1.8" fill="none" stroke="#3d3d3d" stroke-width="1.1"/><path d="M2.6 4.2V10.4" fill="none" stroke="#3d3d3d" stroke-width="1.1"/><circle cx="9.8" cy="10" r="4" fill="#3d3d3d"/><path d="M9.8 7.8V12.2M7.9 8.9L11.7 11.1M11.7 8.9L7.9 11.1" stroke="#f8f8f8" stroke-width="0.9"/><path d="M7.6 5.4V4.8a2.2 2.2 0 0 1 4.4 0v.6" fill="none" stroke="#3d3d3d" stroke-width="1.1"/></svg>
<div class="t" style="left:105.80px;top:838.14px;font-size:12.3px;color:#333333;font-weight:400;font-family:"Liberation Sans",sans-serif;letter-spacing:0px;">main*</div>
<svg style="left:145px;top:836px" width="15" height="15" viewBox="0 0 15 15"><path d="M3.6 3.2A5.6 5.6 0 0 1 12.2 4.4M11.4 12A5.6 5.6 0 0 1 2.8 10.8M1.6 7.6A5.8 5.8 0 0 1 3.6 3.2M13.4 7.6a5.8 5.8 0 0 1-2 4.4M10.4 1.8l1.8 2.6-2.8 1M4.6 13.4l-1.8-2.6 2.8-1" fill="none" stroke="#3d3d3d" stroke-width="1.1"/></svg>
<div class="t" style="left:164.00px;top:837.71px;font-size:12.7px;color:#333333;font-weight:400;font-family:"Liberation Sans",sans-serif;letter-spacing:0px;">0</div>
<svg style="left:171px;top:838px" width="8" height="11" viewBox="0 0 8 11"><path d="M3.8 0.6V9.6M0.8 6.4L3.8 9.6 6.8 6.4" fill="none" stroke="#3d3d3d" stroke-width="1.1"/></svg>
<div class="t" style="left:182.40px;top:837.71px;font-size:12.7px;color:#333333;font-weight:400;font-family:"Liberation Sans",sans-serif;letter-spacing:0px;">2</div>
<svg style="left:191px;top:838px" width="9" height="11" viewBox="0 0 9 11"><path d="M4.2 10.4V1.2M1 4.4L4.2 1.2 7.4 4.4" fill="none" stroke="#3d3d3d" stroke-width="1.1"/></svg>
<svg style="left:217px;top:837px" width="15" height="14" viewBox="0 0 15 14"><circle cx="7.2" cy="7.1" r="6.2" fill="none" stroke="#3d3d3d" stroke-width="1.1"/><path d="M4.6 4.5L9.8 9.7M9.8 4.5L4.6 9.7" fill="none" stroke="#3d3d3d" stroke-width="1.1"/></svg>
<div class="t" style="left:236.40px;top:837.71px;font-size:12.7px;color:#333333;font-weight:400;font-family:"Liberation Sans",sans-serif;letter-spacing:0px;">0</div>
<svg style="left:247px;top:837px" width="16" height="14" viewBox="0 0 16 14"><path d="M7.6 1.2L14.4 12.8H0.8Z" fill="none" stroke="#3d3d3d" stroke-width="1.1" stroke-linejoin="round"/><path d="M7.6 5V9.2M7.6 10.6V11.6" fill="none" stroke="#3d3d3d" stroke-width="1.1"/></svg>
<div class="t" style="left:267.20px;top:837.71px;font-size:12.7px;color:#333333;font-weight:400;font-family:"Liberation Sans",sans-serif;letter-spacing:0px;">0</div>
<svg style="left:289px;top:837px" width="16" height="14" viewBox="0 0 16 14"><path d="M6.4 5.4V1.4l8 4.6-6.2 3.6" fill="none" stroke="#3d3d3d" stroke-width="1.1"/><path d="M2.4 8.6a2.1 2.1 0 0 1 4.2 0v2.6a2.1 2.1 0 0 1-4.2 0ZM1 9.6H2.4M6.6 9.6H8M1.2 12.8L2.4 12M7.8 12.8L6.6 12" fill="none" stroke="#3d3d3d" stroke-width="1.1" stroke-width="1"/></svg>
<div class="t" style="left:321.60px;top:837.53px;font-size:12.9px;color:#333333;font-weight:400;font-family:"Liberation Sans",sans-serif;letter-spacing:0px;">Quarto: 1.8.13</div>
<div class="a" style="left:861px;top:834px;width:33px;height:20px;background:#bfc3c9"></div>
<svg style="left:869px;top:836px" width="16" height="16" viewBox="0 0 16 16"><circle cx="6.5" cy="5.4" r="5.0" fill="none" stroke="#3d3d3d" stroke-width="1.1" stroke-width="1.2"/><path d="M4.2 5.4H8.8M6.5 3.1V7.7" fill="none" stroke="#3d3d3d" stroke-width="1.1" stroke-width="1.1"/><path d="M10.1 9.1L13.8 12.6" fill="none" stroke="#3d3d3d" stroke-width="1.1" stroke-width="1.3"/></svg>
<div class="t" style="left:901.40px;top:837.58px;font-size:12.85px;color:#333333;font-weight:400;font-family:"Liberation Sans",sans-serif;letter-spacing:0px;">Ln 7, Col 3</div>
<div class="t" style="left:978.40px;top:837.92px;font-size:12.45px;color:#333333;font-weight:400;font-family:"Liberation Sans",sans-serif;letter-spacing:0px;">Spaces: 2</div>
<div class="t" style="left:1050.20px;top:837.45px;font-size:13.0px;color:#333333;font-weight:400;font-family:"Liberation Sans",sans-serif;letter-spacing:0px;">UTF-8</div>
<div class="t" style="left:1102.80px;top:837.79px;font-size:12.6px;color:#333333;font-weight:400;font-family:"Liberation Sans",sans-serif;letter-spacing:0px;">LF</div>
<div class="t" style="left:1133.60px;top:838.63px;font-size:12.2px;color:#333333;font-weight:400;font-family:"Liberation Sans",sans-serif;letter-spacing:-0.8px;">{ }</div>
<div class="t" style="left:1154.20px;top:837.79px;font-size:12.6px;color:#333333;font-weight:400;font-family:"Liberation Sans",sans-serif;letter-spacing:0px;">R</div>
<svg style="left:1177px;top:837px" width="18" height="15" viewBox="0 0 18 15"><path d="M3.6 5.2a3.6 3.6 0 0 1 3.6-3.6h3.6a3.6 3.6 0 0 1 3.6 3.6V10a3.6 3.6 0 0 1-3.6 3.6H7.2A3.6 3.6 0 0 1 3.6 10Z" fill="none" stroke="#3d3d3d" stroke-width="1.1" stroke-width="1.3"/><path d="M1.4 6.2V9.2M16.6 6.2V9.2" fill="none" stroke="#3d3d3d" stroke-width="1.1" stroke-width="1.3"/><path d="M4.6 5.6H13.4" fill="none" stroke="#3d3d3d" stroke-width="1.1" stroke-width="1.2"/><circle cx="7" cy="7" r="1.4" fill="none" stroke="#3d3d3d" stroke-width="1.1"/><circle cx="11" cy="7" r="1.4" fill="none" stroke="#3d3d3d" stroke-width="1.1"/><path d="M7.8 10.6H10.2" fill="none" stroke="#3d3d3d" stroke-width="1.1"/></svg>
<svg style="left:1210px;top:836px" width="16" height="16" viewBox="0 0 16 16"><path d="M4 11.4V7.2a4 4 0 0 1 4-4 M12 6.2V11.4L13.6 13H2.4L4 11.4M6.4 14.6h3.2M1.4 1.4L14.4 14.4" fill="none" stroke="#3d3d3d" stroke-width="1.1"/><circle cx="12.6" cy="3.4" r="2.6" fill="#3d3d3d"/></svg>
<svg style="left:296px;top:248px" width="12" height="18" viewBox="0 0 12 18"><path d="M1 1V14.6L4.4 11.4 6.8 16.6 8.8 15.6 6.4 10.6H11Z" fill="#111" stroke="#fff" stroke-width="1"/></svg>
</div></body></html>
